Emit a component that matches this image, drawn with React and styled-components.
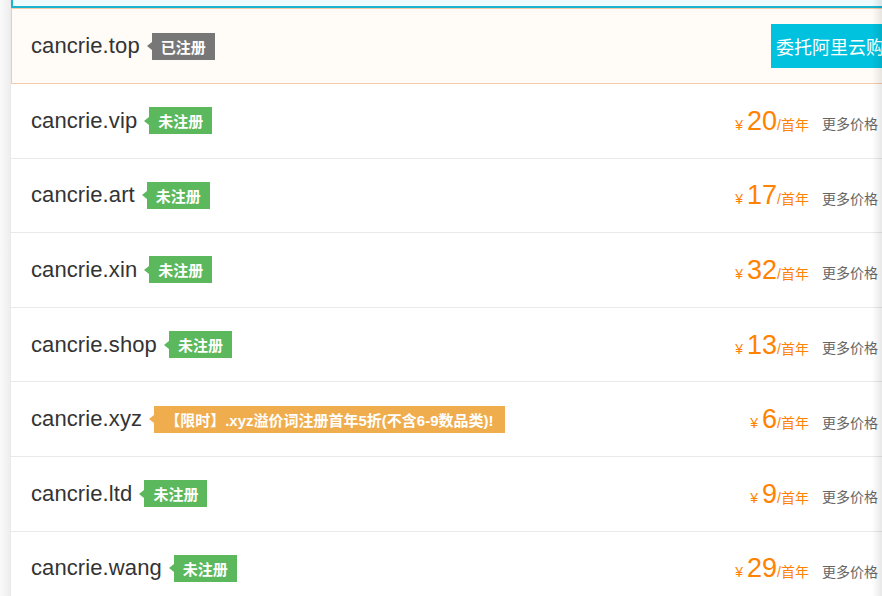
import React from 'react'
import styled, { createGlobalStyle } from 'styled-components'

const GlobalStyle = createGlobalStyle`
  html, body {
    margin: 0;
    padding: 0;
    overflow: hidden;
    background: #fff;
  }
  body {
    font-family: "Liberation Sans", Arial, "Noto Sans CJK SC", sans-serif;
  }
`

const Page = styled.div`
  min-height: 100vh;
  padding-left: 11px;
  background: linear-gradient(to right, #f9f9f9 0, #eeeeee 10px, #e4e4e4 11px, #fff 11px);
`

const Panel = styled.div`
  width: 1101px;
  background: #fff;
`

const SearchEdge = styled.div`
  height: 8px;
  box-sizing: border-box;
  background: #f0fbfe;
  border-left: 2px solid #1cb5cf;
  border-bottom: 2px solid #1cb5cf;
`

const Row = styled.div`
  display: flex;
  align-items: center;
  box-sizing: border-box;
  height: ${p => (p.$taken ? '76px' : '74.6px')};
  padding: 0 180px 0 ${p => (p.$taken ? '19px' : '20px')};
  background: ${p => (p.$taken ? '#fffbf6' : '#fff')};
  border: ${p => (p.$taken ? '1px solid #f6c9a9' : 'none')};
  border-right: none;
  border-bottom: 1px solid ${p => (p.$taken ? '#f6c9a9' : '#e9e9e9')};
`

const NameCell = styled.div`
  flex: 1;
  display: flex;
  align-items: center;
  min-width: 0;
`

const Domain = styled.span`
  font-size: 22px;
  color: #333;
  letter-spacing: 0.1px;
`

const tagColors = {
  taken: '#777777',
  free: '#5cb85c',
  promo: '#f0ad4e',
}

const Tag = styled.span`
  position: relative;
  display: inline-flex;
  align-items: center;
  height: 27px;
  margin-left: 12px;
  padding: 0 ${p => (p.$kind === 'promo' ? '11px' : '9px')};
  background: ${p => tagColors[p.$kind]};
  color: #fff;
  font-family: "Liberation Sans", Arial, "Noto Sans CJK SC", sans-serif;
  font-size: 15px;
  font-weight: bold;
  white-space: nowrap;

  &::before {
    content: '';
    position: absolute;
    left: -5px;
    top: 50%;
    margin-top: -4px;
    border-style: solid;
    border-width: 4px 5px 4px 0;
    border-color: transparent ${p => tagColors[p.$kind]} transparent transparent;
  }
`

const PriceCell = styled.div`
  width: 160px;
  text-align: right;
  color: #ff8200;
  white-space: nowrap;
`

const Yen = styled.span`
  font-size: 14px;
  margin-right: 4px;
`

const Amount = styled.span`
  font-size: 27px;
  line-height: 30px;
`

const Unit = styled.span`
  font-size: 14px;
`

const MoreCell = styled.div`
  width: 123px;
  box-sizing: border-box;
  padding: 5px 0 0 13px;
  font-size: 14px;
  color: #666;
  white-space: nowrap;
`

const BuyCell = styled.div`
  width: 161px;
`

const BuyButton = styled.button`
  height: 44px;
  padding: 0 5px;
  border: none;
  background: #00c1de;
  color: #fff;
  font-family: "Liberation Sans", Arial, "Noto Sans CJK SC", sans-serif;
  font-size: 18px;
  white-space: nowrap;
  cursor: pointer;
`

const EdgeShade = styled.div`
  position: fixed;
  top: 0;
  right: 0;
  width: 10px;
  height: 100%;
  background: linear-gradient(to right, rgba(0, 0, 0, 0), rgba(0, 0, 0, 0.09));
  pointer-events: none;
`

const domains = [
  { name: 'cancrie.vip', tag: '未注册', kind: 'free', price: 20 },
  { name: 'cancrie.art', tag: '未注册', kind: 'free', price: 17 },
  { name: 'cancrie.xin', tag: '未注册', kind: 'free', price: 32 },
  { name: 'cancrie.shop', tag: '未注册', kind: 'free', price: 13 },
  { name: 'cancrie.xyz', tag: '【限时】.xyz溢价词注册首年5折(不含6-9数品类)!', kind: 'promo', price: 6 },
  { name: 'cancrie.ltd', tag: '未注册', kind: 'free', price: 9 },
  { name: 'cancrie.wang', tag: '未注册', kind: 'free', price: 29 },
]

export default function App() {
  return (
    <>
      <GlobalStyle />
      <Page>
        <Panel>
          <SearchEdge />
          <Row $taken>
            <NameCell>
              <Domain>cancrie.top</Domain>
              <Tag $kind="taken">已注册</Tag>
            </NameCell>
            <BuyCell>
              <BuyButton>委托阿里云购买</BuyButton>
            </BuyCell>
          </Row>
          {domains.map(d => (
            <Row key={d.name}>
              <NameCell>
                <Domain>{d.name}</Domain>
                <Tag $kind={d.kind}>{d.tag}</Tag>
              </NameCell>
              <PriceCell>
                <Yen>¥</Yen>
                <Amount>{d.price}</Amount>
                <Unit>/首年</Unit>
              </PriceCell>
              <MoreCell>更多价格</MoreCell>
            </Row>
          ))}
        </Panel>
      </Page>
      <EdgeShade />
    </>
  )
}
